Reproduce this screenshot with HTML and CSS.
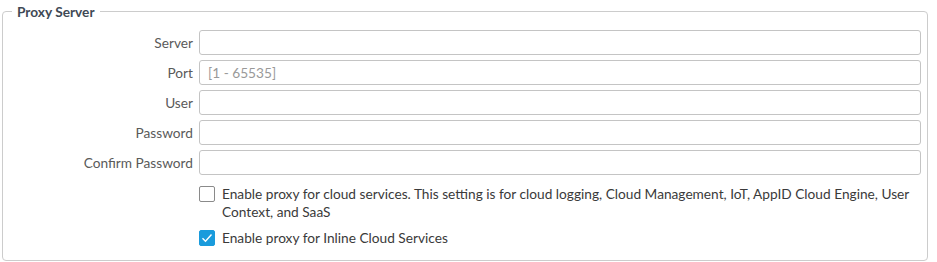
FILE: index.html
```html
<!DOCTYPE html>
<html lang="en">
  <head>
    <meta charset="UTF-8" />
    <title>Proxy Server</title>
    <link rel="stylesheet" href="styles.css">
  </head>
  <body>
    <fieldset class="proxy-box">
      <legend>Proxy Server</legend>
      <div class="form-grid">
        <label>Server</label>
        <input type="text" />
        <label>Port</label>
        <input type="text" placeholder="[1 - 65535]" />
        <label>User</label>
        <input type="text" />
        <label>Password</label>
        <input type="password" />
        <label>Confirm Password</label>
        <input type="password" />
      </div>
      <div class="options">
        <label class="check-row">
          <span class="box"></span>
          <span>Enable proxy for cloud services. This setting is for cloud logging, Cloud Management, IoT, AppID Cloud Engine, User Context, and SaaS</span>
        </label>
        <label class="check-row">
          <span class="box checked">
            <svg width="12" height="10" viewBox="0 0 12 10"><path d="M1.5 5.2 L4.5 8.2 L10.5 1.5" fill="none" stroke="#fff" stroke-width="1.4"/></svg>
          </span>
          <span>Enable proxy for Inline Cloud Services</span>
        </label>
      </div>
    </fieldset>
  </body>
</html>
```

FILE: styles.css
```css
* {
  box-sizing: border-box;
}
body {
  margin: 0;
  padding: 3px 9px 2px 2px;
  background: #fff;
  font-family: "Lato", sans-serif;
  font-size: 13.7px;
  color: #555;
}
.proxy-box {
  margin: 0;
  padding: 10px 6px 13px 0;
  border: 1px solid #ccc;
  border-radius: 4px;
}
.proxy-box legend {
  margin-left: 9px;
  padding: 0 5px;
  font-weight: bold;
  color: #3f4a55;
  font-size: 13.7px;
}
.form-grid {
  display: grid;
  grid-template-columns: 190px 1fr;
  column-gap: 6px;
  row-gap: 5px;
  align-items: center;
}
.form-grid label {
  text-align: right;
  color: #5a5a5a;
}
.form-grid input {
  height: 25px;
  border: 1px solid #c4c4c4;
  border-radius: 3px;
  padding: 0 8px;
  font-family: "Lato", sans-serif;
  font-size: 13.7px;
  color: #333;
}
.form-grid input::placeholder {
  color: #999;
}
.options {
  padding-left: 196px;
  margin-top: 10px;
}
.check-row {
  display: flex;
  gap: 7px;
  line-height: 18px;
  color: #3a3a3a;
  margin-bottom: 8px;
}
.check-row:last-child {
  margin-bottom: 0;
}
.box {
  flex: none;
  width: 16px;
  height: 16px;
  margin-top: 1px;
  border: 1px solid #8a8a8a;
  border-radius: 2px;
  display: flex;
  align-items: center;
  justify-content: center;
}
.box.checked {
  background: #1a9bdc;
  border-color: #1a9bdc;
}
```
